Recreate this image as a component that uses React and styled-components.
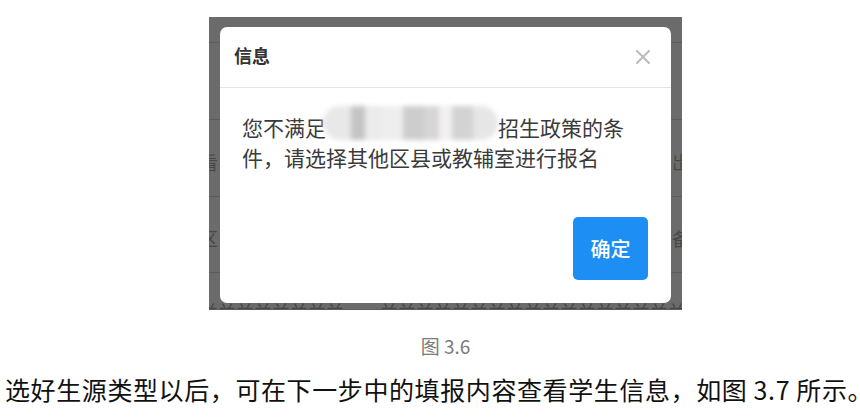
import React from 'react'
import styled, { createGlobalStyle } from 'styled-components'

const GlobalStyle = createGlobalStyle`
  html, body {
    margin: 0;
    padding: 0;
    background: #fff;
  }
  body {
    font-family: "Noto Sans CJK SC", "Noto Sans", sans-serif;
  }
`

const Page = styled.div`
  width: 860px;
  height: 418px;
  overflow: hidden;
  display: flex;
  flex-direction: column;
`

const Figure = styled.div`
  width: 473px;
  margin: 17px 0 0 209px;
  display: flex;
  flex-direction: column;
`

const Shot = styled.div`
  position: relative;
  height: 293px;
  background: #6b6b6b;
  overflow: hidden;
`

const Row = styled.div`
  height: ${p => p.h}px;
  border-bottom: 1px solid #5d5d5d;
  box-sizing: border-box;
  display: flex;
  align-items: ${p => (p.bottom ? 'flex-end' : 'center')};
  justify-content: space-between;
  color: #474747;
  font-size: 18px;
  line-height: 20px;
  padding-top: ${p => p.shift || 0}px;
`

const EdgeText = styled.span`
  margin-left: ${p => (p.right ? 0 : -9)}px;
  margin-right: ${p => (p.right ? -8 : 0)}px;
  white-space: nowrap;
`

const Modal = styled.div`
  position: absolute;
  left: 11px;
  top: 10px;
  width: 451px;
  height: 276px;
  background: #fff;
  border-radius: 7px;
  display: flex;
  flex-direction: column;
`

const Header = styled.div`
  height: 60px;
  flex: none;
  padding: 0 20px 0 14px;
  border-bottom: 1px solid #e3e3e3;
  display: flex;
  align-items: center;
  justify-content: space-between;
`

const Title = styled.span`
  font-size: 18px;
  font-weight: 700;
  color: #333;
  margin-top: -4px;
`

const Body = styled.div`
  padding: 24px 22px 0;
  font-size: 21px;
  line-height: 30px;
  color: #3a3a3a;
`

const Blur = styled.span`
  display: inline-block;
  width: 175px;
  height: 34px;
  vertical-align: -4px;
  margin: -6px 0 0 -3px;
  border-radius: 17px;
  background: linear-gradient(
    90deg,
    #e8e8e8 0 16%,
    #c4c4c4 16% 24%,
    #ebebeb 24% 34%,
    #eeeeee 34% 46%,
    #cdcdcd 46% 58%,
    #d6d6d6 58% 66%,
    #f3f1f0 66% 74%,
    #d3d3d3 74% 86%,
    #e6e6e6 86% 100%
  );
  filter: blur(2.5px);
`

const Footer = styled.div`
  margin-top: auto;
  padding: 0 23px 23px 0;
  display: flex;
  justify-content: flex-end;
`

const Button = styled.button`
  width: 75px;
  height: 63px;
  border: none;
  border-radius: 5px;
  background: #1d8ff4;
  color: #fff;
  font-family: inherit;
  font-size: 20px;
  font-weight: 500;
  cursor: pointer;
`

const Caption = styled.div`
  margin-top: 21px;
  text-align: center;
  font-size: 19px;
  line-height: 30px;
  color: #7a7a7a;
`

const Text = styled.p`
  margin: 13px 0 0 5px;
  font-size: 25px;
  line-height: 30px;
  letter-spacing: 0.6px;
  color: #111;
  white-space: nowrap;
`

function CloseIcon() {
  return (
    <svg width="16" height="16" viewBox="0 0 16 16">
      <path d="M2 2L14 14M14 2L2 14" stroke="#bdbdbd" strokeWidth="2.2" strokeLinecap="round" />
    </svg>
  )
}

export default function App() {
  return (
    <Page>
      <GlobalStyle />
      <Figure>
        <Shot>
          <Row h={26} />
          <Row h={77} shift={6}>
            <EdgeText>冫</EdgeText>
            <EdgeText right>　</EdgeText>
          </Row>
          <Row h={77} shift={8}>
            <EdgeText>看</EdgeText>
            <EdgeText right>岀</EdgeText>
          </Row>
          <Row h={76} shift={6}>
            <EdgeText>区</EdgeText>
            <EdgeText right>备</EdgeText>
          </Row>
          <Row h={37} bottom>
            <EdgeText style={{ marginBottom: -12 }}>兰兰兰兰兰兰兰兰　　兰兰兰兰兰兰兰兰兰兰兰兰兰兰兰兰兰兰兰兰兰</EdgeText>
          </Row>
          <Modal>
            <Header>
              <Title>信息</Title>
              <CloseIcon />
            </Header>
            <Body>
              您不满足<Blur />招生政策的条
              <br />
              件，请选择其他区县或教辅室进行报名
            </Body>
            <Footer>
              <Button>确定</Button>
            </Footer>
          </Modal>
        </Shot>
        <Caption>图 3.6</Caption>
      </Figure>
      <Text>选好生源类型以后，可在下一步中的填报内容查看学生信息，如图 3.7 所示。</Text>
    </Page>
  )
}
